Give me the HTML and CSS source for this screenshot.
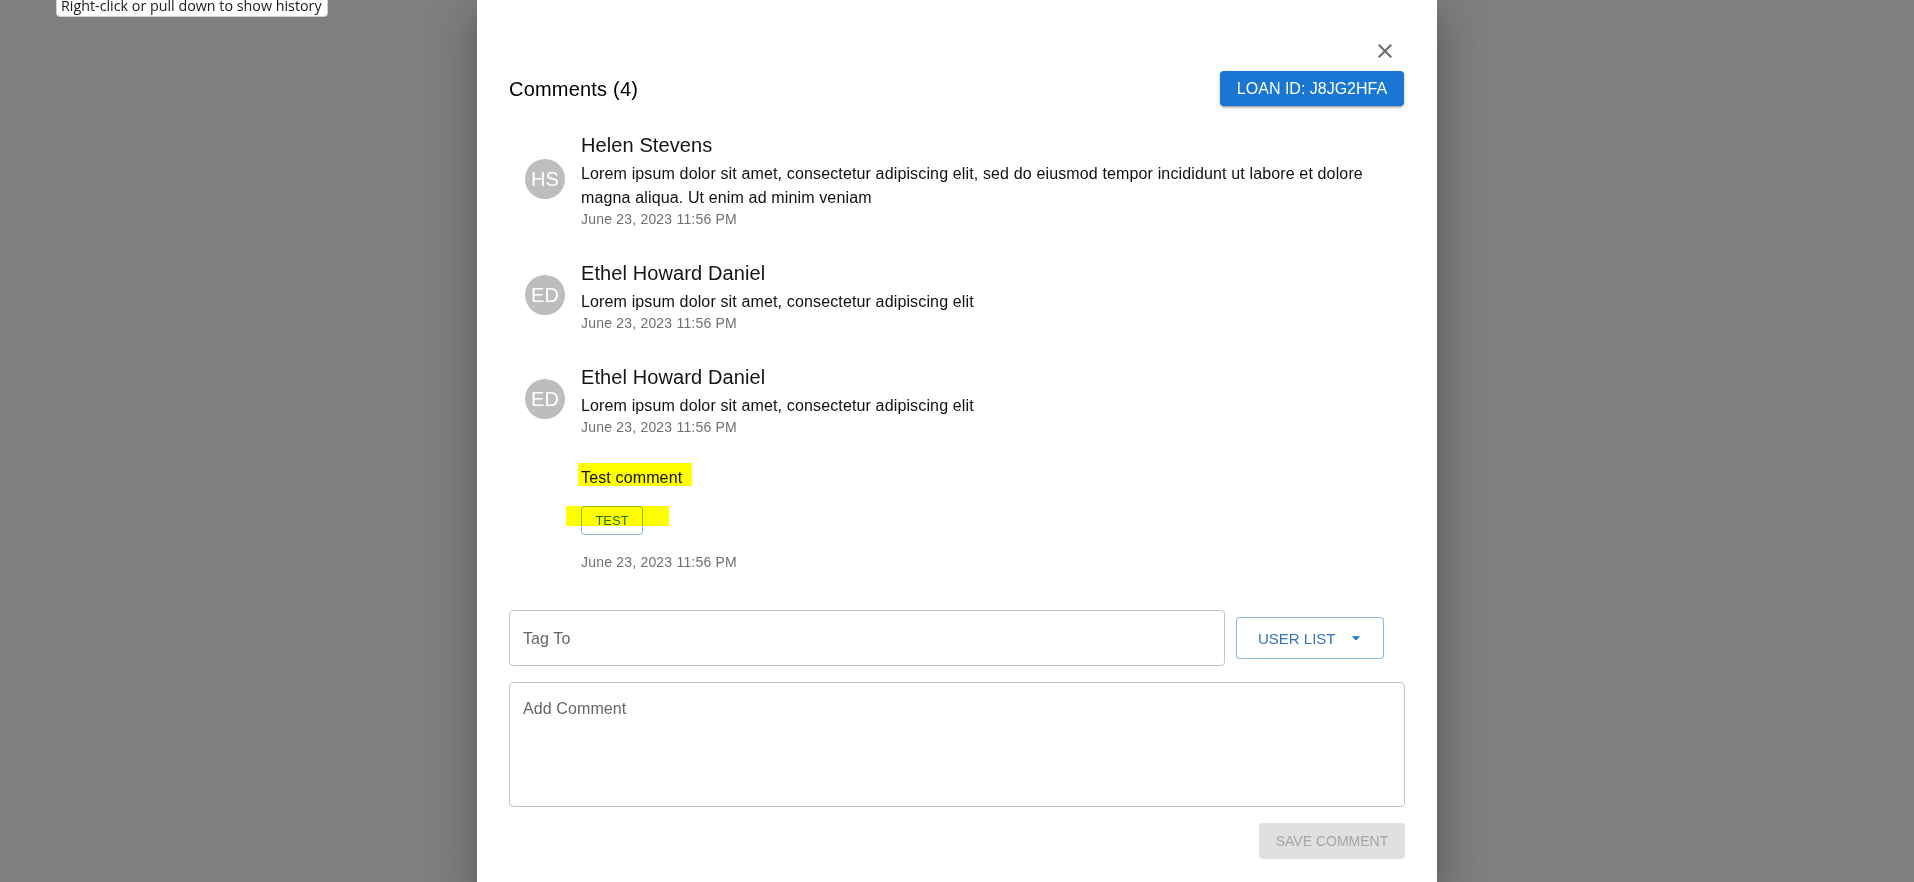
FILE: index.html
```html
<!DOCTYPE html>
<html lang="en">
<head>
<meta charset="utf-8">
<title>Comments</title>
<link rel="stylesheet" href="styles.css">
</head>
<body>
<div class="backdrop">
  <div class="tooltip">Right-click or pull down to show history</div>
  <div class="dialog">
    <div class="close-row">
      <button class="icon-btn" aria-label="close">
        <svg viewBox="0 0 24 24" width="24" height="24"><path d="M19 6.41 17.59 5 12 10.59 6.41 5 5 6.41 10.59 12 5 17.59 6.41 19 12 13.41 17.59 19 19 17.59 13.41 12z" fill="currentColor"/></svg>
      </button>
    </div>
    <div class="header">
      <h2 class="title">Comments (4)</h2>
      <button class="loan-btn">LOAN ID: J8JG2HFA</button>
    </div>
    <ul class="list">
      <li class="item">
        <div class="avatar-wrap"><div class="avatar">HS</div></div>
        <div class="text">
          <div class="name">Helen Stevens</div>
          <div class="body">Lorem ipsum dolor sit amet, consectetur adipiscing elit, sed do eiusmod tempor incididunt ut labore et dolore magna aliqua. Ut enim ad minim veniam</div>
          <div class="time">June 23, 2023 11:56 PM</div>
        </div>
      </li>
      <li class="item">
        <div class="avatar-wrap"><div class="avatar">ED</div></div>
        <div class="text">
          <div class="name">Ethel Howard Daniel</div>
          <div class="body">Lorem ipsum dolor sit amet, consectetur adipiscing elit</div>
          <div class="time">June 23, 2023 11:56 PM</div>
        </div>
      </li>
      <li class="item">
        <div class="avatar-wrap"><div class="avatar">ED</div></div>
        <div class="text">
          <div class="name">Ethel Howard Daniel</div>
          <div class="body">Lorem ipsum dolor sit amet, consectetur adipiscing elit</div>
          <div class="time">June 23, 2023 11:56 PM</div>
        </div>
      </li>
      <li class="item item-plain">
        <div class="avatar-wrap"></div>
        <div class="text">
          <div class="body"><span class="hl hl-text">Test comment</span></div>
          <div class="tag-row"><span class="hl hl-tag"><button class="tag-btn">TEST</button></span></div>
          <div class="time time-gap">June 23, 2023 11:56 PM</div>
        </div>
      </li>
    </ul>
    <div class="form-row">
      <div class="field tag-field"><span class="placeholder">Tag To</span></div>
      <button class="user-btn">USER LIST
        <svg viewBox="0 0 24 24" width="20" height="20"><path d="M7 10l5 5 5-5z" fill="currentColor"/></svg>
      </button>
    </div>
    <div class="field comment-field"><span class="placeholder">Add Comment</span></div>
    <div class="actions">
      <button class="save-btn" disabled>SAVE COMMENT</button>
    </div>
  </div>
</div>
</body>
</html>
```
FILE: styles.css
```css
* { box-sizing: border-box; }
html, body { margin: 0; padding: 0; height: 100%; overflow: hidden; }
body {
  font-family: "Liberation Sans", Arial, sans-serif;
  background: #7f7f7f;
}
.backdrop {
  position: relative;
  height: 882px;
  display: flex;
  justify-content: center;
}
.tooltip {
  position: absolute;
  left: 56px;
  top: -4px;
  width: 272px;
  height: 21px;
  padding: 0 0 0 4px;
  background: #fff;
  border: 1px solid #d0d0d0;
  border-radius: 4px;
  font-family: "Open Sans", "Noto Sans", sans-serif;
  font-size: 14.3px;
  line-height: 18px;
  color: #1a1a1a;
  white-space: nowrap;
  z-index: 5;
}
.dialog {
  width: 960px;
  height: 882px;
  background: #fff;
  padding: 31px 32px 0;
  box-shadow: 0 11px 15px -7px rgba(0,0,0,.2), 0 24px 38px 3px rgba(0,0,0,.14), 0 9px 46px 8px rgba(0,0,0,.12);
  overflow: hidden;
}
.close-row { display: flex; justify-content: flex-end; height: 40px; }
.icon-btn {
  width: 40px; height: 40px; padding: 8px; border: 0; background: none;
  color: #6b6b6b; display: flex; align-items: center; justify-content: center;
}
.header {
  display: flex; justify-content: space-between; align-items: center; height: 35px;
}
.title { margin: 0; font-size: 20px; font-weight: 400; color: #000; line-height: 24px; letter-spacing: 0.2px; }
.loan-btn {
  height: 35px; width: 184px; margin-right: 1px;
  border: 0; border-radius: 4px;
  background: #1976d2; color: #fff;
  font-family: inherit; font-size: 16px; letter-spacing: 0;
  box-shadow: 0 3px 1px -2px rgba(0,0,0,.2), 0 2px 2px 0 rgba(0,0,0,.14), 0 1px 5px 0 rgba(0,0,0,.12);
}
.list { list-style: none; margin: 0; padding: 9px 0 8px; }
.item { display: flex; align-items: center; padding: 10px 16px; }
.avatar-wrap { flex: 0 0 56px; }
.avatar {
  width: 40px; height: 40px; border-radius: 50%;
  background: #bdbdbd; color: #fff;
  display: flex; align-items: center; justify-content: center;
  font-size: 20px;
}
.text { flex: 1; margin: 4px 0; min-width: 0; }
.name { font-size: 20px; line-height: 32px; color: #141414; letter-spacing: 0.1px; }
.body { font-size: 16px; line-height: 24px; color: #111; letter-spacing: 0.14px; padding-top: 1px; margin-bottom: -1px; }
.time { font-size: 14px; line-height: 20px; color: #707070; letter-spacing: 0.2px; }
.time-gap { margin-top: 17px; }
.tag-row { margin-top: 17px; height: 29px; }
.hl { position: relative; display: inline-block; }
.hl::after {
  content: "";
  position: absolute;
  background: #ffff00;
  mix-blend-mode: multiply;
  pointer-events: none;
}
.hl-text::after { left: -3px; top: -3px; width: 114px; height: 23px; }
.hl-tag::after { left: -15px; top: 0; width: 103px; height: 20px; }
.tag-btn {
  display: block;
  width: 62px; height: 29px; padding: 0;
  background: #fff;
  border: 1px solid rgba(25,118,210,.5);
  border-radius: 4px;
  color: #1976d2;
  font-family: inherit; font-size: 13px;
}
.form-row { display: flex; align-items: center; margin-top: 16px; }
.field {
  border: 1px solid #c4c4c4; border-radius: 4px; background: #fff;
}
.tag-field { flex: 0 0 716px; height: 56px; padding: 0 13px; display: flex; align-items: center; }
.placeholder { font-size: 16px; color: #666; line-height: 19px; letter-spacing: 0.1px; }
.user-btn {
  margin-left: 11px;
  width: 148px; height: 42px;
  display: flex; align-items: center;
  padding: 0 17px 0 21px;
  background: #fff;
  border: 1px solid rgba(25,118,210,.5);
  border-radius: 4px;
  color: #3574bd;
  font-family: inherit; font-size: 15px;
}
.user-btn svg { margin-left: 10px; color: #1976d2; flex: 0 0 20px; }
.comment-field { margin-top: 16px; height: 125px; padding: 16px 13px; }
.actions { display: flex; justify-content: flex-end; margin-top: 16px; }
.save-btn {
  height: 36px; width: 146px; padding: 0;
  border: 0; border-radius: 4px;
  background: #e0e0e0; color: #a6a6a6;
  font-family: inherit; font-size: 14px;
}
```
